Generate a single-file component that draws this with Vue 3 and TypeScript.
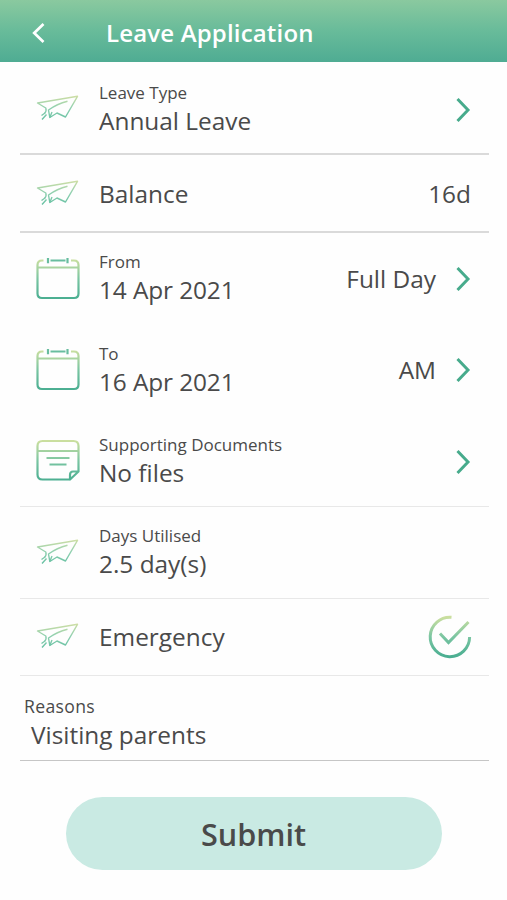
<script setup lang="ts">
import { ref } from 'vue'

type IconName = 'plane' | 'calendar' | 'note'

interface Row {
  id: string
  icon: IconName
  label?: string
  value: string
  extra?: string
  chevron?: boolean
  check?: boolean
}

const rows = ref<Row[]>([
  { id: 'type', icon: 'plane', label: 'Leave Type', value: 'Annual Leave', chevron: true },
  { id: 'balance', icon: 'plane', value: 'Balance', extra: '16d' },
  { id: 'from', icon: 'calendar', label: 'From', value: '14 Apr 2021', extra: 'Full Day', chevron: true },
  { id: 'to', icon: 'calendar', label: 'To', value: '16 Apr 2021', extra: 'AM', chevron: true },
  { id: 'documents', icon: 'note', label: 'Supporting Documents', value: 'No files', chevron: true },
  { id: 'days', icon: 'plane', label: 'Days Utilised', value: '2.5 day(s)' },
  { id: 'emergency', icon: 'plane', value: 'Emergency', check: true },
])
const reason = ref('Visiting parents')
</script>

<template>
  <div class="screen">
    <svg class="defs" width="0" height="0" aria-hidden="true">
      <defs>
        <linearGradient id="leaf" gradientUnits="userSpaceOnUse" x1="0" y1="2" x2="0" y2="42">
          <stop offset="0" stop-color="#cbdf9f" />
          <stop offset="0.5" stop-color="#7ac5a2" />
          <stop offset="1" stop-color="#4aae91" />
        </linearGradient>
        <linearGradient id="wing" gradientUnits="userSpaceOnUse" x1="0" y1="8" x2="0" y2="34">
          <stop offset="0" stop-color="#d3dfa4" />
          <stop offset="0.5" stop-color="#8fd0b0" />
          <stop offset="1" stop-color="#62bfa2" />
        </linearGradient>
      </defs>
    </svg>

    <header class="header">
      <svg class="back" viewBox="0 0 14 22"><path d="M12.5 2 L3.2 11 L12.5 20" /></svg>
      <h1 class="title">Leave Application</h1>
    </header>

    <main class="form">
      <section v-for="row in rows" :key="row.id" class="row" :class="row.id">
        <svg v-if="row.icon === 'plane'" class="icon plane" viewBox="0 0 44 44">
          <path d="M8.5 26.5 Q10.8 24 9.8 21 L1.5 16 L41.5 9.3 L29.5 30 L21 26 L13.8 30.5 L12.5 23 Q21 17 31.5 14.3" />
          <path d="M6 32.5 L10.5 27.5 M5.5 28.5 L9 26 M13.8 30.5 L16 25" />
        </svg>
        <svg v-else-if="row.icon === 'calendar'" class="icon" viewBox="0 0 44 44">
          <path d="M7.5 3.5 H6 Q1.5 3.5 1.5 8 V36.5 Q1.5 41 6 41 H38 Q42.5 41 42.5 36.5 V8 Q42.5 3.5 38 3.5 H35 M1.5 10.5 H42.5" />
          <path class="rings" d="M14.5 3.5 H29.5 M12 1 V6.2 M31.5 1 V6.2" />
        </svg>
        <svg v-else class="icon note" viewBox="0 0 44 44">
          <path d="M33.5 40.5 H6.5 Q1.5 40.5 1.5 35.5 V7 Q1.5 2 6.5 2 H37.5 Q42.5 2 42.5 7 V32.5 L34 40.5 V36 Q34 32.5 37 32.5 H42.5 M1.5 12 H42.5 M10.5 19 H33.5 M13.5 25.5 H30.5" />
        </svg>

        <div class="text">
          <span v-if="row.label" class="label">{{ row.label }}</span>
          <span class="value">{{ row.value }}</span>
        </div>

        <span v-if="row.extra" class="extra">{{ row.extra }}</span>
        <svg v-if="row.chevron" class="chevron" viewBox="0 0 16 26"><path d="M2.5 2 L13 13 L2.5 24" /></svg>
        <svg v-if="row.check" class="check" viewBox="0 0 44 44">
          <path d="M23.5 2.3 A19.7 19.7 0 1 0 41.6 22 M12 18.5 L20.5 27.5 L40.5 7" />
        </svg>
      </section>

      <section class="reasons">
        <span class="label">Reasons</span>
        <span class="value">{{ reason }}</span>
      </section>

      <button class="submit" type="button">Submit</button>
    </main>
  </div>
</template>

<style>
body {
  background: #fefefe;
}
</style>

<style scoped>
.screen {
  width: 507px;
  height: 900px;
  overflow: hidden;
  background: #fefefe;
  color: #4a4a4a;
  font-family: 'Open Sans', 'Noto Sans', sans-serif;
}

.defs {
  display: block;
}

.header {
  display: flex;
  align-items: center;
  box-sizing: border-box;
  height: 62px;
  padding: 4px 32px 0 31px;
  background: linear-gradient(#8ac99f, #68bb9a 50%, #4fac93);
}

.back {
  width: 14px;
  height: 22px;
  fill: none;
  stroke: #fff;
  stroke-width: 2.7;
}

.title {
  margin: 0 0 0 61px;
  color: #fff;
  font-size: 24px;
  font-weight: 600;
  letter-spacing: 0.17px;
  line-height: 34px;
}

.form {
  display: flex;
  flex-direction: column;
  padding: 0 18px 0 20px;
}

.row {
  display: flex;
  align-items: center;
  box-sizing: border-box;
  height: 91px;
  padding: 0 18px 0 16px;
}

.type {
  height: 93px;
  padding-top: 3px;
  border-bottom: 2px solid #dadada;
}

.balance {
  height: 78px;
  padding-top: 2px;
  border-bottom: 2px solid #dadada;
}

.to {
  height: 92px;
}

.documents {
  border-bottom: 1px solid #e8e8e8;
}

.days {
  height: 92px;
  border-bottom: 1px solid #e8e8e8;
}

.emergency {
  height: 77px;
  border-bottom: 1px solid #e8e8e8;
}

.icon,
.check {
  flex: none;
  width: 44px;
  height: 44px;
  fill: none;
  stroke: url(#leaf);
  stroke-width: 2.2;
  stroke-linejoin: round;
}

.plane {
  stroke: url(#wing);
  stroke-width: 1.4;
}

.rings {
  stroke: #68bd9f;
}

.check {
  margin-right: -1px;
  stroke-width: 3;
  stroke-linejoin: miter;
}

.text {
  display: flex;
  flex: 1;
  flex-direction: column;
  margin-left: 19px;
  white-space: nowrap;
}

.label {
  font-size: 17px;
  line-height: 24px;
}

.value,
.extra {
  font-size: 24.4px;
  line-height: 34px;
}

.label + .value {
  margin-top: -1px;
}

.from .value,
.to .value {
  letter-spacing: -0.1px;
}

.extra {
  padding-right: 1px;
}

.balance .extra {
  padding-right: 0;
}

.chevron {
  width: 16px;
  height: 26px;
  margin-left: 18px;
  fill: none;
  stroke: #47ab8c;
  stroke-width: 3;
}

.type .chevron {
  margin-top: 1px;
}

.documents .chevron {
  margin-top: 2px;
}

.reasons {
  display: flex;
  flex-direction: column;
  box-sizing: border-box;
  height: 85px;
  padding: 18px 4px 0;
  border-bottom: 1px solid #c6c6c6;
}

.reasons .label {
  font-size: 17.6px;
  letter-spacing: 0.35px;
}

.reasons .value {
  margin-top: 1px;
  padding-left: 7px;
  line-height: 32px;
}

.submit {
  align-self: center;
  width: 376px;
  height: 73px;
  margin: 36px 2px 0 0;
  padding: 0;
  border: 0;
  border-radius: 37px;
  background: #c9eae3;
  color: #4a4a4a;
  font-family: inherit;
  font-size: 30.6px;
  font-weight: 600;
}
</style>
